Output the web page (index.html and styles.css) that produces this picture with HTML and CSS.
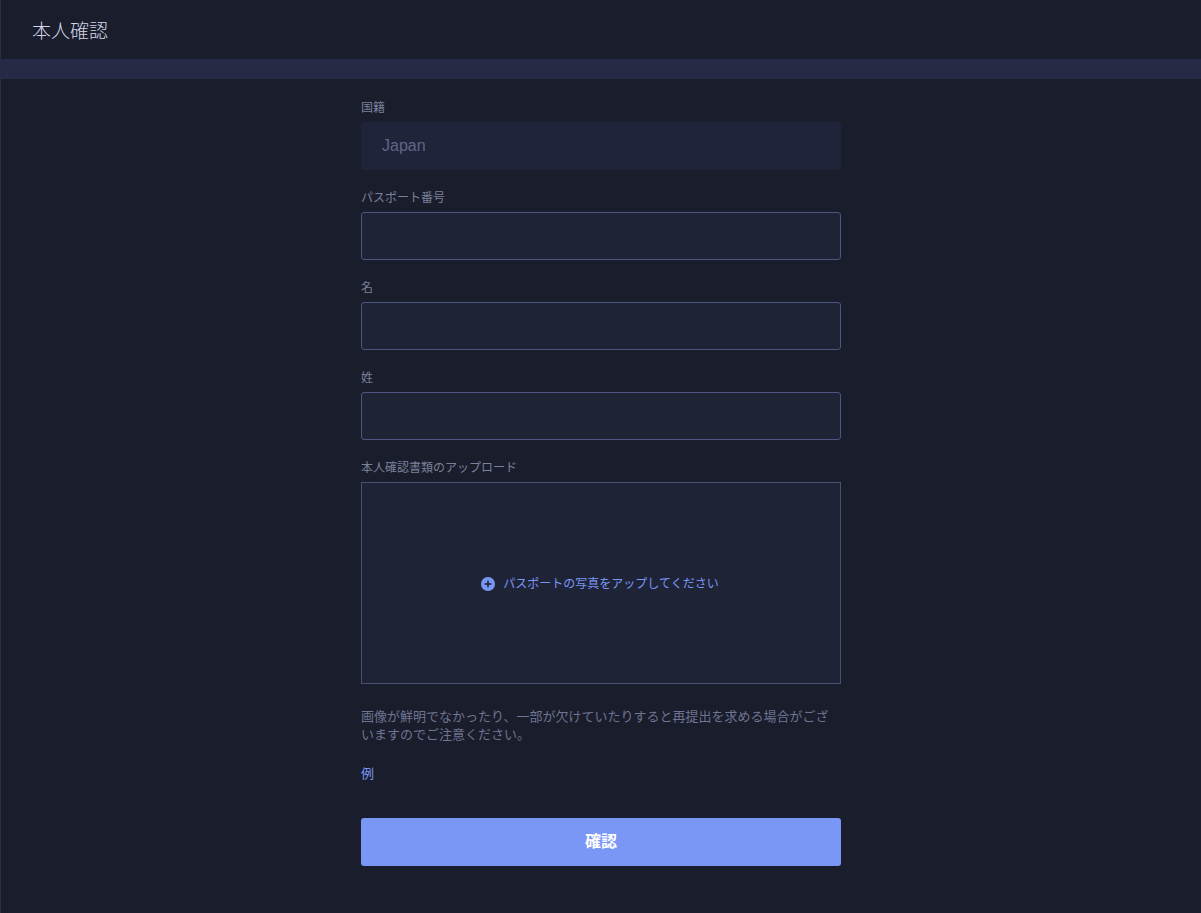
FILE: index.html
```html
<!DOCTYPE html>
<html lang="ja">
<head>
<meta charset="utf-8">
<title>本人確認</title>
<link rel="stylesheet" href="styles.css">
</head>
<body>
<header class="topbar">
  <h1 class="title">本人確認</h1>
</header>
<div class="band"></div>
<main class="page">
  <form class="form">
    <div class="field">
      <label class="label">国籍</label>
      <div class="input input-disabled">Japan</div>
    </div>
    <div class="field">
      <label class="label">パスポート番号</label>
      <input class="input" type="text">
    </div>
    <div class="field">
      <label class="label">名</label>
      <input class="input" type="text">
    </div>
    <div class="field">
      <label class="label">姓</label>
      <input class="input" type="text">
    </div>
    <div class="field">
      <label class="label">本人確認書類のアップロード</label>
      <div class="upload">
        <span class="upload-inner">
          <svg class="plus" width="14" height="14" viewBox="0 0 14 14"><circle cx="7" cy="7" r="7" fill="#7b97f6"/><path d="M7 3.5v7M3.5 7h7" stroke="#1b1e2e" stroke-width="1.4"/></svg>
          <span class="upload-text">パスポートの写真をアップしてください</span>
        </span>
      </div>
    </div>
    <p class="note">画像が鮮明でなかったり、一部が欠けていたりすると再提出を求める場合がございますのでご注意ください。</p>
    <a class="example">例</a>
    <button type="button" class="submit">確認</button>
  </form>
</main>
</body>
</html>
```
FILE: styles.css
```css
* { box-sizing: border-box; }
html, body { margin: 0; padding: 0; }
body {
  background: #1a1d2b;
  font-family: "Noto Sans CJK JP", "Noto Sans", sans-serif;
  min-height: 913px;
}
.topbar {
  height: 59px;
  border-left: 1px solid #2c3046;
  display: flex;
  align-items: center;
  padding-left: 31px;
}
.title {
  margin: 0;
  font-size: 19px;
  font-weight: 300;
  color: #d3d6e6;
  line-height: 1;
}
.band {
  height: 20px;
  background: #272a45;
}
.page {
  border-left: 1px solid #2c3046;
  min-height: 834px;
  display: flex;
  justify-content: center;
  padding-top: 19px;
}
.form {
  width: 480px;
  display: flex;
  flex-direction: column;
}
.field {
  display: flex;
  flex-direction: column;
  margin-bottom: 18px;
}
.label {
  font-size: 12px;
  line-height: 18px;
  color: #7b809b;
  margin-bottom: 6px;
}
.input {
  height: 48px;
  width: 100%;
  background: #1f2336;
  border: 1px solid #4d5680;
  border-radius: 3px;
  color: #cfd3e6;
  font-size: 16px;
  padding: 0 20px;
  outline: none;
}
.input-disabled {
  border-color: #202438;
  background: #20243a;
  color: #5f6686;
  font-family: "Liberation Sans", Arial, sans-serif;
  display: flex;
  align-items: center;
}
.upload {
  height: 202px;
  border: 1px solid #4a5070;
  background: #1f2336;
  display: flex;
  align-items: center;
  justify-content: center;
}
.upload-inner {
  display: flex;
  align-items: center;
  gap: 8px;
  margin-left: -2px;
}
.plus { display: block; margin-top: 2px; }
.upload-text {
  font-size: 12px;
  color: #7b97f6;
  line-height: 18px;
}
.note {
  margin: 5px 0 0;
  font-size: 13px;
  line-height: 18px;
  color: #6f7492;
}
.example {
  margin-top: 21px;
  font-size: 13px;
  line-height: 18px;
  color: #7b97f6;
  align-self: flex-start;
}
.submit {
  margin-top: 36px;
  height: 48px;
  width: 100%;
  border: none;
  border-radius: 3px;
  background: #7a97f6;
  color: #ffffff;
  font-family: "Noto Sans CJK JP", "Noto Sans", sans-serif;
  font-size: 16px;
  font-weight: 700;
  padding: 0 0 4px;
}
```
